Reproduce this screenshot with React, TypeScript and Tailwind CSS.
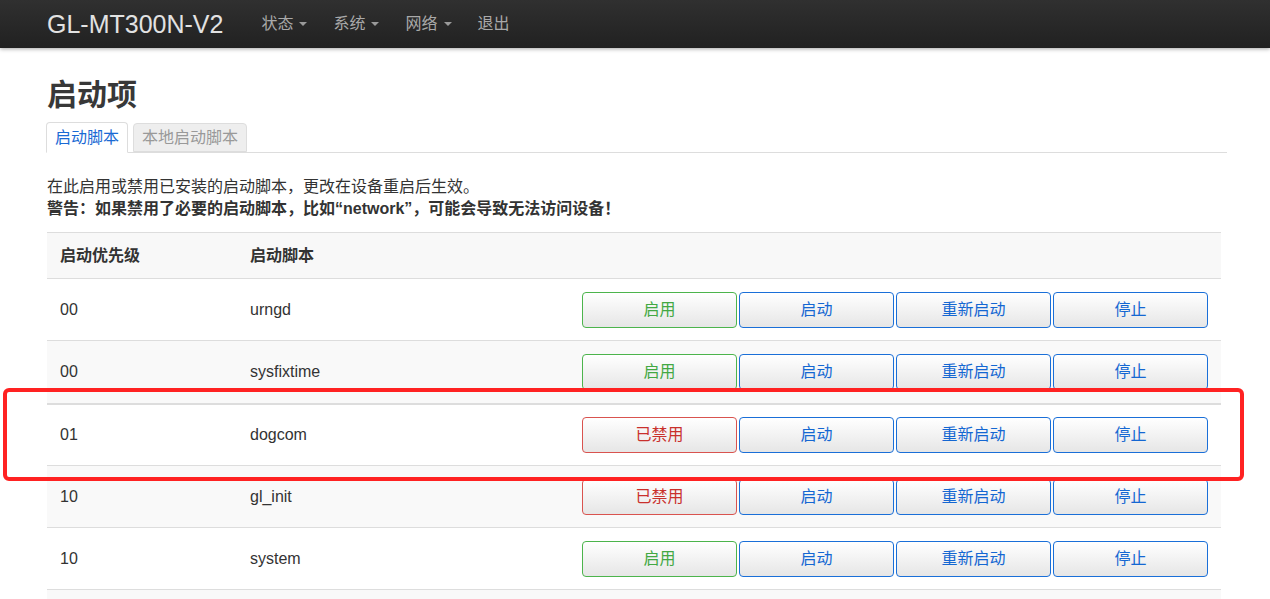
import React from "react";

const rows = [
  { p: "00", name: "urngd", enabled: true },
  { p: "00", name: "sysfixtime", enabled: true },
  { p: "01", name: "dogcom", enabled: false },
  { p: "10", name: "gl_init", enabled: false },
  { p: "10", name: "system", enabled: true },
];

function Caret() {
  return (
    <span className="ml-[6px] inline-block w-0 h-0 border-l-[4px] border-r-[4px] border-t-[4px] border-l-transparent border-r-transparent border-t-[#9a9a9a] align-middle" />
  );
}

function Btn({ children, tone }: { children: React.ReactNode; tone: "green" | "red" | "blue" }) {
  const cls =
    tone === "green"
      ? "border-[#4cb44c] text-[#43a843]"
      : tone === "red"
      ? "border-[#d9534f] text-[#c9302c]"
      : "border-[#1a6fd8] text-[#1467d2]";
  return (
    <button
      className={`w-[155px] h-[36px] rounded-[4px] border bg-gradient-to-b from-white to-[#e6e6e6] text-[16px] leading-none ${cls}`}
    >
      {children}
    </button>
  );
}

export default function App() {
  return (
    <div
      className="relative min-h-screen bg-white text-[#333] overflow-hidden"
      style={{ fontFamily: '"Liberation Sans", "Noto Sans CJK SC", sans-serif' }}
    >
      <nav className="h-12 bg-gradient-to-b from-[#303030] to-[#212121] shadow-[0_1px_4px_rgba(0,0,0,0.35)] flex items-center pl-[47px]">
        <span className="text-[25px] text-[#e2e2e2] leading-none">GL-MT300N-V2</span>
        <ul className="flex ml-[25px] text-[16px] text-[#a9a9a9]">
          <li className="px-[13px] flex items-center">状态<Caret /></li>
          <li className="px-[13px] flex items-center">系统<Caret /></li>
          <li className="px-[13px] flex items-center">网络<Caret /></li>
          <li className="px-[13px] flex items-center">退出</li>
        </ul>
      </nav>

      <div className="ml-[46px] w-[1181px]">
        <h2 className="mt-[29px] text-[30px] leading-[36px] font-bold text-[#383838] pl-[1px]">启动项</h2>
        <ul className="mt-[9px] flex items-end gap-[5px] border-b border-[#ddd] h-[31px]">
          <li className="h-[31px] -mb-px px-[8px] flex items-center border border-[#ddd] border-b-white bg-white rounded-t-[4px] text-[16px] text-[#1a6ad4]">
            启动脚本
          </li>
          <li className="h-[29px] px-[8px] flex items-center border border-[#ddd] bg-[#eeeeee] rounded-t-[4px] text-[16px] text-[#999]">
            本地启动脚本
          </li>
        </ul>

        <div className="pl-[1px] mt-[23px] text-[16px] leading-[22px]">
          <p>在此启用或禁用已安装的启动脚本，更改在设备重启后生效。</p>
          <p className="font-bold">警告：如果禁用了必要的启动脚本，比如“network”，可能会导致无法访问设备！</p>
        </div>

        <div className="ml-[1px] mt-[12px] w-[1174px] text-[16px]">
          <div className="h-[46px] flex items-center border-t border-[#ddd] bg-[#f8f8f8] font-bold">
            <div className="w-[190px] pl-[13px]">启动优先级</div>
            <div className="pl-[13px]">启动脚本</div>
          </div>
          {rows.map((r, i) => (
            <div
              key={r.name}
              className={`flex items-center border-[#ddd] ${i === 2 ? "h-[62px] border-t-2" : i === 1 ? "h-[63px] border-t" : "h-[62px] border-t"} ${i % 2 === 1 ? "bg-[#f9f9f9]" : "bg-white"}`}
            >
              <div className="w-[190px] pl-[13px]">{r.p}</div>
              <div className="pl-[13px] flex-1">{r.name}</div>
              <div className="flex gap-[2px] pr-[13px]">
                {r.enabled ? <Btn tone="green">启用</Btn> : <Btn tone="red">已禁用</Btn>}
                <Btn tone="blue">启动</Btn>
                <Btn tone="blue">重新启动</Btn>
                <Btn tone="blue">停止</Btn>
              </div>
            </div>
          ))}
          <div className="h-[20px] border-t border-[#ddd] bg-[#f9f9f9]" />
        </div>
      </div>

      <div className="absolute left-[3px] top-[388px] w-[1241px] h-[93px] border-[4px] border-[#ff2222] rounded-[6px] pointer-events-none" />
    </div>
  );
}
